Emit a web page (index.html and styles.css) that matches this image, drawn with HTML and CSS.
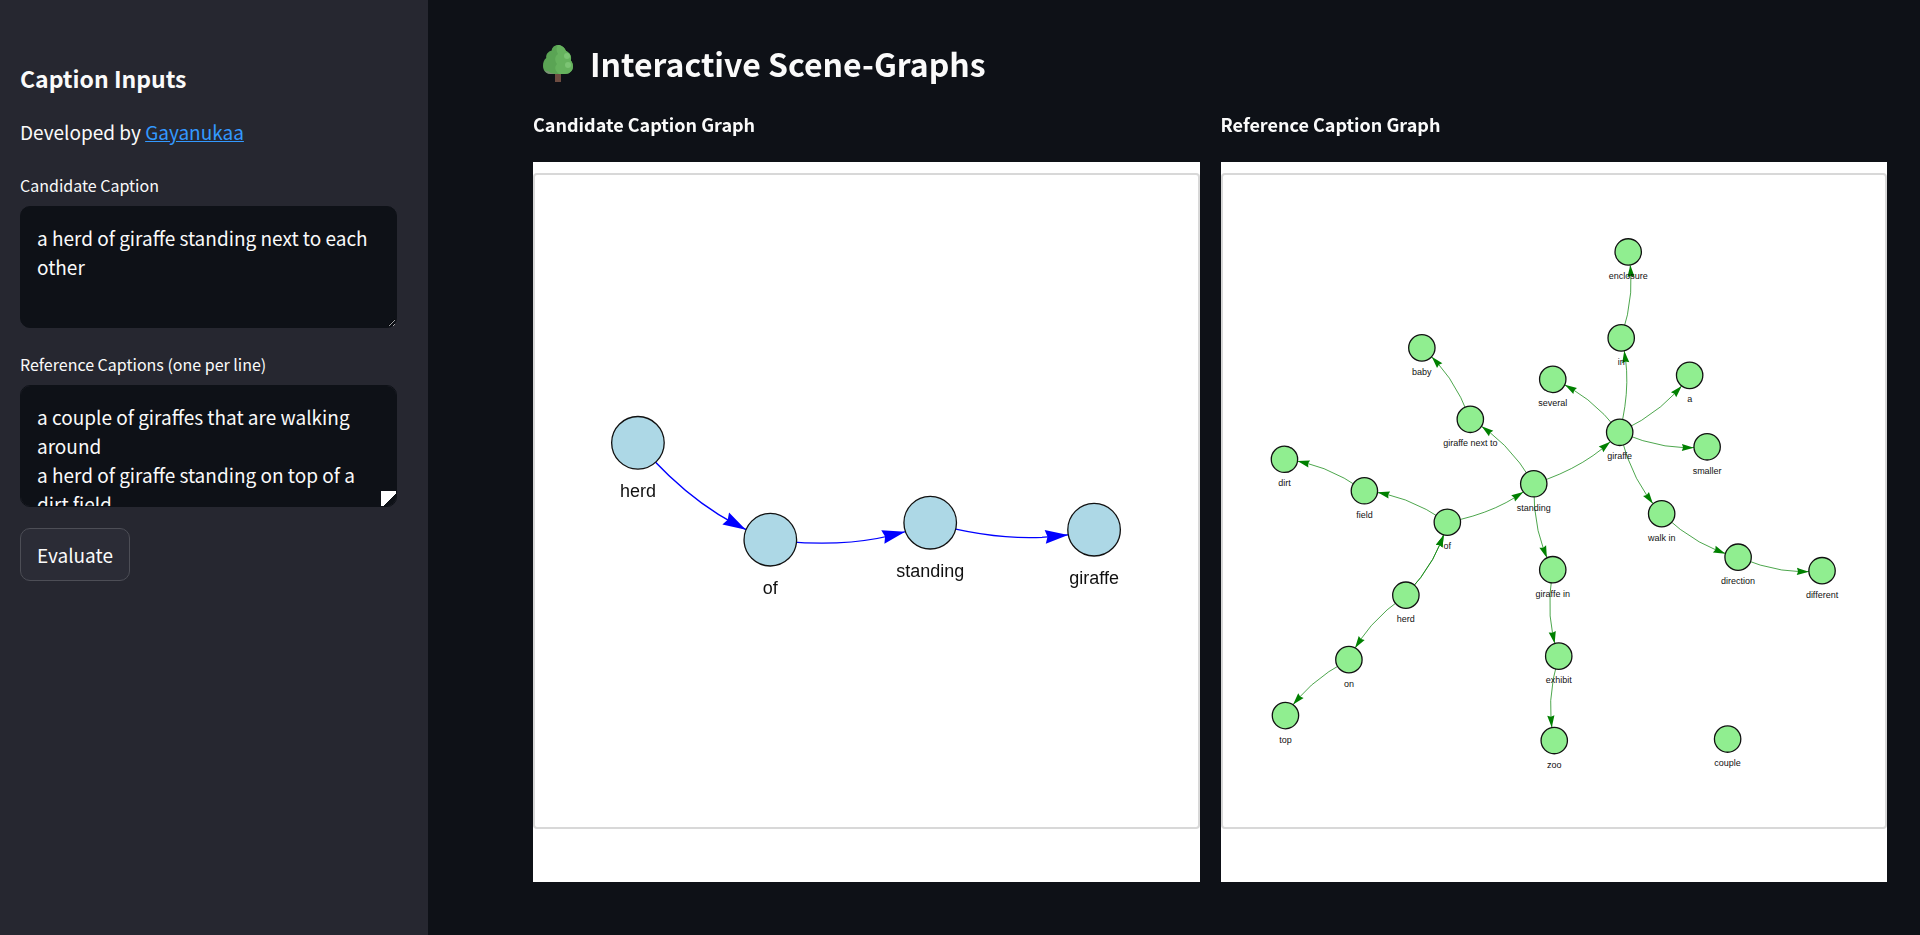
FILE: index.html
```html
<!DOCTYPE html>
<html lang="en">
<head>
    <meta charset="UTF-8">
    <meta name="viewport" content="width=device-width, initial-scale=1.0">
    <title>Interactive Scene-Graphs</title>
    <link rel="stylesheet" href="styles.css">
</head>
<body>

    <div class="app">
        <aside class="sidebar">
            <h2>Caption Inputs</h2>
            <p>Developed by <a href="#">Gayanukaa</a></p>

            <form class="caption-form">
                <label for="candidate">Candidate Caption</label>
                <textarea id="candidate">a herd of giraffe standing next to each other</textarea>

                <label for="references">Reference Captions (one per line)</label>
                <textarea id="references" class="scrolling">a couple of giraffes that are walking around
a herd of giraffe standing on top of a dirt field</textarea>

                <button type="button">Evaluate</button>
            </form>
        </aside>

        <main class="main">
            <h1>
                <svg class="tree" viewBox="0 0 30 37" aria-hidden="true">
                    <path d="M12 27h6v10h-6z" fill="#6d4c41"/>
                    <path d="M15 0c-3.400 0-6 2.400-6.300 5.500C5 6.500 2.800 9.500 3.200 13 .9 15 0 17.500 0 21c0 5 3.500 8 8 8h14c4.500 0 8-3.200 8-7.500 0-2.500-.8-4.500-2.200-6 1.200-4-.8-7.800-4.800-9.500C21.500 2.500 18.500 0 15 0z" fill="#5aa454"/>
                    <path d="M15 0c3.500 0 6.500 2.500 8 6 4 1.700 6 5.500 4.800 9.500 1.400 1.500 2.200 3.500 2.200 6 0 4.300-3.500 7.500-8 7.500h-6c-4-3-5-7-2-10-3-4-2-8 1-10-2-3-2-6 0-9z" fill="#66b25e"/>
                    <circle cx="24" cy="11" r="3" fill="#7cc474"/>
                    <circle cx="25" cy="20" r="3" fill="#7cc474"/>
                    <path d="M1 24c1 3 3.500 5 7 5h4c-3-.5-5-1-6-2.500-2 0-4-.7-5-2.500z" fill="#7d8f78"/>
                </svg>
                Interactive Scene-Graphs
            </h1>

            <div class="columns">
                <section>
                    <h3>Candidate Caption Graph</h3>
                    <div class="panel">
                        <svg class="graph candidate" id="candidateGraph" viewBox="0 0 663 652"></svg>
                    </div>
                </section>
                <section>
                    <h3>Reference Caption Graph</h3>
                    <div class="panel">
                        <svg class="graph reference" id="referenceGraph" viewBox="0 0 663 652"></svg>
                    </div>
                </section>
            </div>
        </main>
    </div>

    <script src="graph.js"></script>
</body>
</html>
```
FILE: styles.css
```css
* {
    box-sizing: border-box;
}

body {
    margin: 0;
    font-family: "Noto Sans CJK JP", "Noto Sans", sans-serif;
    font-size: 19px;
    line-height: 29px;
    background: #0e1117;
    color: #fafafa;
}

h1, h2, h3, p {
    margin: 0;
}

.app {
    display: flex;
    min-height: 100vh;
}

/* Sidebar */
.sidebar {
    flex: 0 0 428px;
    padding: 60px 31px 20px 20px;
    background: #262730;
}

h2 {
    font-size: 23px;
    line-height: 36px;
    margin-bottom: 21px;
}

.sidebar a {
    color: #3399ff;
}

.caption-form {
    display: flex;
    flex-direction: column;
    align-items: flex-start;
    margin-top: 24px;
}

label {
    font-size: 16px;
    line-height: 30px;
    margin-bottom: 6px;
}

textarea {
    width: 100%;
    height: 122px;
    margin-bottom: 21px;
    padding: 16px;
    font: inherit;
    color: #fafafa;
    background: #0e1117;
    border: 1px solid #0e1117;
    border-radius: 10px;
    outline: none;
    resize: vertical;
}

.scrolling::-webkit-scrollbar {
    width: 8px;
    height: 8px;
    background: transparent;
}

.scrolling::-webkit-resizer {
    background: linear-gradient(135deg, #fff 60%, transparent 60%);
}

button {
    padding: 11px 16px;
    font: inherit;
    color: #fafafa;
    background: #2b2c36;
    border: 1px solid #4d4e56;
    border-radius: 10px;
    cursor: pointer;
}

/* Main area */
.main {
    flex: 1;
    min-width: 0;
    padding: 35px 33px 53px 105px;
}

h1 {
    display: flex;
    align-items: center;
    gap: 17px;
    padding-left: 10px;
    font-size: 32px;
    line-height: 56px;
}

.tree {
    width: 30px;
    height: 37px;
}

.columns {
    display: grid;
    grid-template-columns: 1fr 1fr;
    gap: 21px;
    margin-top: 15px;
}

h3 {
    font-size: 18px;
    line-height: 36px;
    margin-bottom: 20px;
}

.panel {
    padding: 11px 0 53px;
    background: #fff;
}

.graph {
    display: block;
    width: 100%;
    border: 2px solid #d8d8d8;
    border-radius: 4px;
}

/* Graph nodes and edges */
.graph text {
    font-family: "Liberation Sans", Arial, sans-serif;
    text-anchor: middle;
    fill: #111;
}

.graph circle {
    stroke: #111;
    stroke-width: 1.300px;
}

.graph .line {
    fill: none;
}

.candidate text {
    font-size: 18px;
}

.candidate circle {
    fill: lightblue;
}

.candidate .line {
    stroke: blue;
    stroke-width: 1.300px;
}

.candidate .arrow {
    fill: blue;
}

.reference text {
    font-size: 9px;
}

.reference circle {
    fill: lightgreen;
}

.reference .line {
    stroke: green;
    stroke-width: 1px;
    opacity: 0.7;
}

.reference .arrow {
    fill: green;
}
```
FILE: graph.js
```js
const SVG_NS = 'http://www.w3.org/2000/svg';

function add(svg, tag, attrs) {
    const el = document.createElementNS(SVG_NS, tag);
    for (const key in attrs) {
        el.setAttribute(key, attrs[key]);
    }
    svg.appendChild(el);
    return el;
}

function drawEdge(svg, from, to, radius, size) {
    const dx = to[0] - from[0];
    const dy = to[1] - from[1];
    // control point, edges bend to the right of their direction
    const cx = from[0] + 0.56 * dx - 0.134 * dy;
    const cy = from[1] + 0.56 * dy + 0.134 * dx;

    const point = t => [
        (1 - t) * (1 - t) * from[0] + 2 * t * (1 - t) * cx + t * t * to[0],
        (1 - t) * (1 - t) * from[1] + 2 * t * (1 - t) * cy + t * t * to[1]
    ];

    // where the edge meets the target node
    let t = 1;
    let tip = point(t);
    while (Math.hypot(tip[0] - to[0], tip[1] - to[1]) < radius) {
        t -= 0.002;
        tip = point(t);
    }

    const back = point(t - 0.2);
    const angle = Math.atan2(tip[1] - back[1], tip[0] - back[0]);

    add(svg, 'path', {
        class: 'line',
        d: `M${from} Q${cx},${cy} ${to}`
    });
    add(svg, 'path', {
        class: 'arrow',
        d: `M0,0 L${-size},${size * 0.3} L${-size * 0.9},0 L${-size},${-size * 0.3}Z`,
        transform: `translate(${tip}) rotate(${angle * 180 / Math.PI})`
    });
}

function drawGraph(id, nodes, edges, opts) {
    const svg = document.getElementById(id);
    edges.forEach(([a, b]) => drawEdge(svg, nodes[a], nodes[b], opts.radius, opts.arrow));
    for (const name in nodes) {
        const [x, y] = nodes[name];
        add(svg, 'circle', { cx: x, cy: y, r: opts.radius });
        add(svg, 'text', { x: x, y: y + opts.label }).textContent = name;
    }
}

drawGraph('candidateGraph', {
    'herd': [103, 268],
    'of': [235.5, 365],
    'standing': [395.5, 348],
    'giraffe': [559.5, 355]
}, [
    ['herd', 'of'],
    ['of', 'standing'],
    ['standing', 'giraffe']
], { radius: 26.3, arrow: 23, label: 54 });

drawGraph('referenceGraph', {
    'dirt': [61.5, 284.5],
    'field': [141.5, 316],
    'of': [224.5, 347.5],
    'standing': [311, 309],
    'giraffe next to': [247.5, 244.5],
    'baby': [199, 173],
    'several': [330, 204.5],
    'giraffe': [397, 257.5],
    'in': [398.5, 163],
    'enclosure': [405.5, 77],
    'a': [467, 200.5],
    'smaller': [484.5, 272],
    'walk in': [439, 339],
    'direction': [515.5, 382.5],
    'different': [599.5, 396],
    'giraffe in': [330, 395],
    'exhibit': [336, 481.5],
    'zoo': [331.5, 566],
    'herd': [183, 420.5],
    'on': [126, 485],
    'top': [62.5, 541],
    'couple': [505, 564.5]
}, [
    ['field', 'dirt'],
    ['of', 'field'],
    ['of', 'standing'],
    ['standing', 'giraffe next to'],
    ['giraffe next to', 'baby'],
    ['standing', 'giraffe'],
    ['standing', 'giraffe in'],
    ['giraffe', 'several'],
    ['giraffe', 'in'],
    ['in', 'enclosure'],
    ['giraffe', 'a'],
    ['giraffe', 'smaller'],
    ['giraffe', 'walk in'],
    ['walk in', 'direction'],
    ['direction', 'different'],
    ['giraffe in', 'exhibit'],
    ['exhibit', 'zoo'],
    ['herd', 'of'],
    ['herd', 'of'],
    ['herd', 'on'],
    ['on', 'top']
], { radius: 13.2, arrow: 12, label: 27 });
```
